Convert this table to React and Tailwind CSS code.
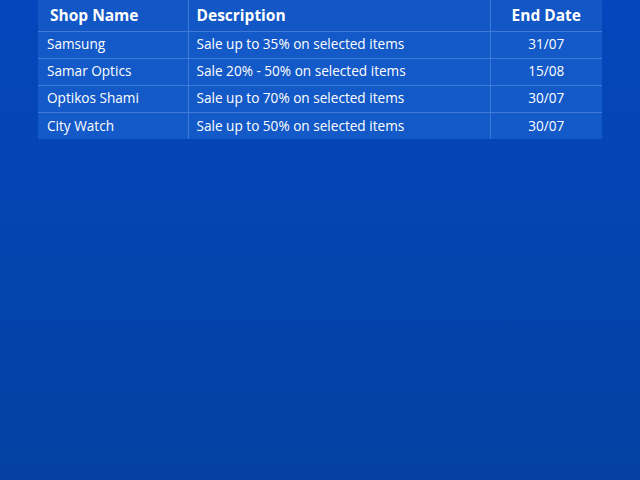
const rows = [
  { shop: 'Samsung', desc: 'Sale up to 35% on selected items', end: '31/07' },
  { shop: 'Samar Optics', desc: 'Sale 20% - 50% on selected items', end: '15/08' },
  { shop: 'Optikos Shami', desc: 'Sale up to 70% on selected items', end: '30/07' },
  { shop: 'City Watch', desc: 'Sale up to 50% on selected items', end: '30/07' },
]

export default function App() {
  return (
    <div className="h-[480px] w-[640px] bg-gradient-to-b from-[#0546bd] to-[#0441a2] px-[38px] font-['Open_Sans',sans-serif] text-white">
      <table className="w-[564px] border-collapse bg-[#1459c8] text-[13.6px]">
        <thead>
          <tr className="h-[31px] bg-[#1257c5] text-[15.5px] font-semibold">
            <th className="w-[150px] border-r border-b border-[#3f7bd6] pl-[12px] text-left">Shop Name</th>
            <th className="w-[302px] border-r border-b border-[#3f7bd6] pl-[8px] text-left">Description</th>
            <th className="border-b border-[#3f7bd6] text-center">End Date</th>
          </tr>
        </thead>
        <tbody>
          {rows.map((r, i) => (
            <tr key={r.shop} className={`h-[27px] ${i < rows.length - 1 ? 'border-b border-[#3f7bd6]' : ''}`}>
              <td className="border-r border-[#3f7bd6] pl-[9px]">{r.shop}</td>
              <td className="border-r border-[#3f7bd6] pl-[8px]">{r.desc}</td>
              <td className="text-center">{r.end}</td>
            </tr>
          ))}
        </tbody>
      </table>
    </div>
  )
}
